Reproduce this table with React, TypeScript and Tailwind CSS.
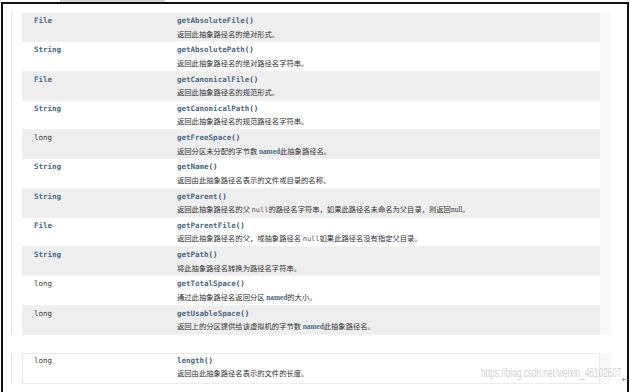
type Row = {
  type: string;
  link: boolean;
  name: string;
  desc: React.ReactNode;
};

const mono = "font-['DejaVu_Sans_Mono','Liberation_Mono',monospace]";
const cjk = "font-['Noto_Sans_CJK_SC',sans-serif]";

function Named() {
  return <span className="font-['Liberation_Serif',serif] font-bold text-[#4a6782]">named</span>;
}

function Null() {
  return <span className={`${mono} text-[#555] text-[7px]`}>null</span>;
}

const rows: Row[] = [
  { type: "File", link: true, name: "getAbsoluteFile", desc: "返回此抽象路径名的绝对形式。" },
  { type: "String", link: true, name: "getAbsolutePath", desc: "返回此抽象路径名的绝对路径名字符串。" },
  { type: "File", link: true, name: "getCanonicalFile", desc: "返回此抽象路径名的规范形式。" },
  { type: "String", link: true, name: "getCanonicalPath", desc: "返回此抽象路径名的规范路径名字符串。" },
  {
    type: "long",
    link: false,
    name: "getFreeSpace",
    desc: (
      <>
        返回分区未分配的字节数 <Named />此抽象路径名。
      </>
    ),
  },
  { type: "String", link: true, name: "getName", desc: "返回由此抽象路径名表示的文件或目录的名称。" },
  {
    type: "String",
    link: true,
    name: "getParent",
    desc: (
      <>
        返回此抽象路径名的父 <Null />的路径名字符串，如果此路径名未命名为父目录，则返回
        <span className="font-['Liberation_Serif',serif]">null</span>。
      </>
    ),
  },
  {
    type: "File",
    link: true,
    name: "getParentFile",
    desc: (
      <>
        返回此抽象路径名的父，或抽象路径名 <Null />如果此路径名没有指定父目录。
      </>
    ),
  },
  { type: "String", link: true, name: "getPath", desc: "将此抽象路径名转换为路径名字符串。" },
  {
    type: "long",
    link: false,
    name: "getTotalSpace",
    desc: (
      <>
        通过此抽象路径名返回分区 <Named />的大小。
      </>
    ),
  },
  {
    type: "long",
    link: false,
    name: "getUsableSpace",
    desc: (
      <>
        返回上的分区提供给该虚拟机的字节数 <Named />此抽象路径名。
      </>
    ),
  },
];

function MethodRow(props: { row: Row; alt: boolean }) {
  const { row, alt } = props;
  return (
    <div
      className={`flex h-[29.27px] border-b border-[#f2f2f2] ${alt ? "bg-[#eeeeef]" : "bg-white"}`}
    >
      <div className="w-[155px] pl-[12px] pt-[3px]">
        <div
          className={`${mono} text-[7.5px] leading-[10px] ${
            row.link ? "font-bold text-[#4a6782]" : "text-[#353833]"
          }`}
        >
          {row.type}
        </div>
      </div>
      <div className="pt-[3px]">
        <div className={`${mono} text-[7.5px] leading-[10px] font-bold text-[#4a6782]`}>
          {row.name}
          <span className="text-[#3d4f63]">()</span>
        </div>
        <div className={`${cjk} mt-[2.5px] text-[7.3px] leading-[10px] text-[#2e2e2e] whitespace-nowrap`}>
          {row.desc}
        </div>
      </div>
    </div>
  );
}

export default function App() {
  return (
    <div className="relative flex h-[392px] w-[630px] flex-col overflow-hidden bg-white">
      <div className="ml-[60px] h-[2px] w-[105px] bg-[#d4d4d4]" />
      <div className="ml-px flex w-[628px] flex-1 flex-col border-l-2 border-r-2 border-t-2 border-[#111]">
        <div className="flex pl-[8px] pt-[9px]">
          <div className="w-px bg-[#e2e2e2]" />
          <div className="ml-[10px] w-[578px]">
            {rows.map((r, i) => (
              <MethodRow key={r.name} row={r} alt={i % 2 === 0} />
            ))}
          </div>
          <div className="w-[11px] bg-[#f8f8f8]" />
        </div>
        <div className="mt-[18px] flex pl-[8px]">
          <div className="w-px bg-[#e2e2e2]" />
          <div className="ml-[10px] w-[578px] border border-[#ececec]">
            <div className="flex h-[29px]">
              <div className="w-[154px] pl-[11px] pt-[2px]">
                <div className={`${mono} text-[7.5px] leading-[10px] text-[#353833]`}>long</div>
              </div>
              <div className="pt-[2px]">
                <div className={`${mono} text-[7.5px] leading-[10px] font-bold text-[#4a6782]`}>
                  length<span className="text-[#3d4f63]">()</span>
                </div>
                <div className={`${cjk} mt-[2.5px] text-[7.3px] leading-[10px] text-[#2e2e2e]`}>
                  返回由此抽象路径名表示的文件的长度。
                </div>
              </div>
            </div>
          </div>
          <div className="w-[11px] bg-[#f8f8f8]" />
        </div>
      </div>
      <div className="absolute left-[481px] top-[365px] origin-left scale-x-[0.66] whitespace-nowrap font-['Liberation_Sans',sans-serif] text-[12.5px] leading-[16px] text-[#d2d2d2]">
        https://blog.csdn.net/weixin_46102607
      </div>
      <div className="absolute left-[622px] top-[375px] font-['DejaVu_Sans',sans-serif] text-[8px] leading-[10px] text-[#888]">
        ←
      </div>
    </div>
  );
}
